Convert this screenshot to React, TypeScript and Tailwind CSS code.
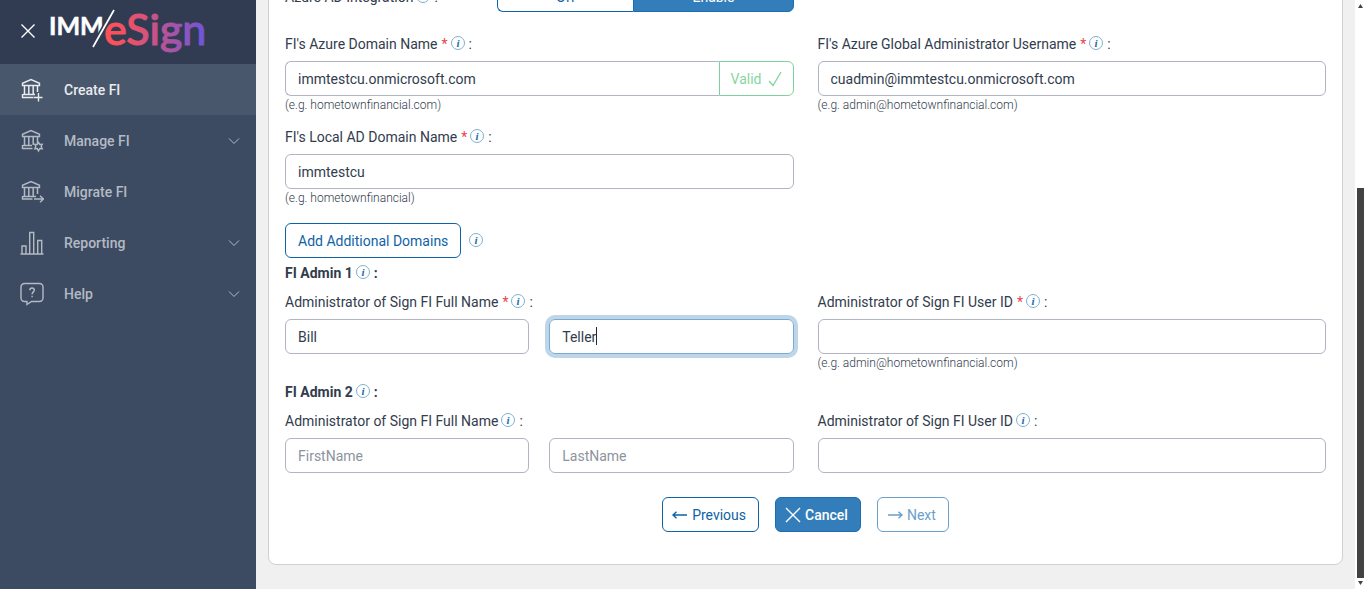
import React from 'react';

type IconProps = { className?: string };

const BankBase: React.FC = () => (
  <>
    <path d="M2.500 7.500V5.300L11 1.500l8.500 3.800v2.200z" />
    <path strokeWidth="1.500" d="M4.500 8v8M8.800 8v8M13.200 8v8M17.500 8v6" />
  </>
);

const CreateIcon: React.FC<IconProps> = ({ className }) => (
  <svg viewBox="0 0 24 24" fill="none" stroke="currentColor" strokeWidth="1.4" className={className}>
    <BankBase />
    <path d="M3 16.500h12M2.500 16v3.500h11M18.500 15v8.500M14 19.500h8.500" />
  </svg>
);

const ManageIcon: React.FC<IconProps> = ({ className }) => (
  <svg viewBox="0 0 24 24" fill="none" stroke="currentColor" strokeWidth="1.4" className={className}>
    <BankBase />
    <path d="M3 16.500h9M2.500 16v3.500h10" />
    <path d="M18.500 13.500l1.300 2 2.400-.200-1 2.200 1 2.200-2.400-.200-1.300 2.500-1.300-2.500-2.400.200 1-2.200-1-2.200 2.400.200z" />
  </svg>
);

const MigrateIcon: React.FC<IconProps> = ({ className }) => (
  <svg viewBox="0 0 24 24" fill="none" stroke="currentColor" strokeWidth="1.4" className={className}>
    <BankBase />
    <path d="M3 16.500h13M2.500 16v3h10" />
    <path d="M14 19h9.500M20 15.800l3.400 3.200-3.400 3.200" />
  </svg>
);

const ReportIcon: React.FC<IconProps> = ({ className }) => (
  <svg viewBox="0 0 24 24" fill="none" stroke="currentColor" strokeWidth="1.4" className={className}>
    <path d="M.500 23h23M2 23v-8h4v8M9.700 23V1.500h4V23M17.700 23V9.500h4V23" />
  </svg>
);

const HelpIcon: React.FC<IconProps> = ({ className }) => (
  <svg viewBox="0 0 24 24" fill="none" stroke="currentColor" strokeWidth="1.400" className={className}>
    <path d="M4.500 1.500h15a3.500 3.500 0 0 1 3.500 3.500v11a3.500 3.500 0 0 1-3.500 3.500h-8L7 22.500v-3H4.500A3.500 3.500 0 0 1 1 16V5a3.500 3.500 0 0 1 3.500-3.500z" />
    <path d="M9.800 8.200c0-3 4.500-3 4.500 0 0 1.700-2.200 1.700-2.200 4M12.100 13.800v1.500" />
  </svg>
);

const Chevron: React.FC = () => (
  <svg viewBox="0 0 12 12" fill="none" stroke="currentColor" className="w-3 h-3">
    <path d="M1 3.500l5 5 5-5" />
  </svg>
);

const Arrow: React.FC<{ flip?: boolean }> = ({ flip }) => (
  <svg viewBox="0 0 16 10" fill="none" stroke="currentColor" strokeWidth="1.4" className={`w-4 h-[10px] ${flip ? 'rotate-180' : ''}`}>
    <path d="M1 5h14M4.500 1.800L1 5l3.500 3.200" />
  </svg>
);

const InfoIcon: React.FC = () => (
  <svg viewBox="0 0 14 14" className="w-[14px] h-[14px] shrink-0 mb-[2px]" role="img" aria-label="More information">
    <circle cx="7" cy="7" r="6.500" fill="none" stroke="#80b0cc" strokeWidth="1" />
    <text x="7" y="10.500" textAnchor="middle" fontSize="11" fontWeight="700" fontStyle="italic" fontFamily="Liberation Serif, serif" fill="#1b6cab">i</text>
  </svg>
);

const Logo: React.FC = () => (
  <svg viewBox="0 0 160 56" className="w-[160px] h-14" role="img" aria-label="IMM eSign">
    <defs>
      <linearGradient id="sign" gradientUnits="userSpaceOnUse" x1="55" y1="0" x2="156" y2="0">
        <stop offset="0.100" stopColor="#fb5158" />
        <stop offset="0.400" stopColor="#d9527c" />
        <stop offset="0.700" stopColor="#a055ad" />
        <stop offset="1" stopColor="#6c55da" />
      </linearGradient>
    </defs>
    <text x="-1" y="31" fontSize="25" fontWeight="700" fontFamily="Lato, sans-serif" fill="#fff" stroke="#fff" strokeWidth="0.500">IMM</text>
    <text x="54" y="41" fontSize="43" fontWeight="500" fontFamily="Lato, sans-serif" fill="url(#sign)" stroke="url(#sign)" strokeWidth="1">eSign</text>
    <path d="M43 43L64 6" stroke="#313c53" strokeWidth="5" />
    <path d="M43 43L64 6" stroke="#fff" strokeWidth="1.700" />
  </svg>
);

const menuItems = [
  { label: 'Create FI', icon: CreateIcon, active: true, expandable: false },
  { label: 'Manage FI', icon: ManageIcon, active: false, expandable: true },
  { label: 'Migrate FI', icon: MigrateIcon, active: false, expandable: false },
  { label: 'Reporting', icon: ReportIcon, active: false, expandable: true },
  { label: 'Help', icon: HelpIcon, active: false, expandable: true },
];

const Sidebar: React.FC = () => (
  <aside className="w-64 shrink-0 bg-[#3c4b62]">
    <div className="h-16 flex items-center gap-[14px] pl-5 bg-[#313c53]">
      <button aria-label="Close menu" className="w-4 h-4 text-white">
        <svg viewBox="0 0 16 16" fill="none" stroke="currentColor" strokeWidth="1.4" className="w-4 h-4">
          <path d="M1.500 .500l13 13M14.500 .500l-13 13" />
        </svg>
      </button>
      <Logo />
    </div>
    <nav>
      {menuItems.map((item) => {
        const Icon = item.icon;
        return (
          <a
            key={item.label}
            href="#"
            className={`flex items-center h-[51px] pl-5 pr-4 text-sm font-medium ${
              item.active ? 'bg-[#48576c] text-[#e9ebee]' : 'text-[#b4bac4]'
            }`}
          >
            <Icon className="w-6 h-6 shrink-0" />
            <span className="flex-1 pl-5">{item.label}</span>
            {item.expandable && <Chevron />}
          </a>
        );
      })}
    </nav>
  </aside>
);

interface LabelProps {
  htmlFor?: string;
  text: string;
  required?: boolean;
}

const FieldLabel: React.FC<LabelProps> = ({ htmlFor, text, required }) => (
  <label htmlFor={htmlFor} className="flex items-center h-6 mb-[5px] whitespace-nowrap">
    {text}
    {required && <span className="pl-1 text-[#e8464a]">*</span>}
    <span className="flex items-center gap-1 pl-[3px]">
      <InfoIcon />:
    </span>
  </label>
);

const Hint: React.FC<{ children: React.ReactNode }> = ({ children }) => (
  <p className="h-[18px] text-xs leading-[18px] font-light">{children}</p>
);

const Heading: React.FC<{ text: string }> = ({ text }) => (
  <h2 className="flex items-center h-6 mb-[5px] gap-[3px] font-bold">
    {text}
    <span className="flex items-center gap-1"><InfoIcon />:</span>
  </h2>
);

const inputClass = 'block w-full min-w-0 h-[35px] px-3 rounded-md border border-[#b0b4c3] bg-white text-[#323c4d] placeholder:text-[#8d939e] outline-none';

export default function App() {
  return (
    <div className="flex h-screen overflow-hidden bg-[#f0f0f0] font-['Roboto',sans-serif] text-sm text-[#323c4d]">
      <Sidebar />

      <main className="flex-1 min-w-0 flex flex-col justify-end px-3 pb-6">
        <form className="shrink-0 px-4 pt-4 pb-8 bg-white border border-[#cfd0d4] rounded-lg">
          <div className="grid grid-cols-2 gap-6 mb-5">
            <div className="flex items-center">
              <div className="w-5/12">
                <span className="flex items-center gap-[3px]">
                  Azure AD Integration
                  <span className="flex items-center gap-1"><InfoIcon />:</span>
                </span>
              </div>
              <div className="w-7/12 flex h-[31px]">
                <button type="button" className="flex-auto rounded-l-md border border-r-0 border-[#0f62a5] text-[#0f62a5]">Off</button>
                <button type="button" className="flex-auto rounded-r-md border border-[#1b6cb0] bg-[#337eba] text-white">Enable</button>
              </div>
            </div>
          </div>

          <div className="grid grid-cols-2 gap-x-6 gap-y-[11px]">
            <div>
              <FieldLabel htmlFor="azure-domain" text="FI's Azure Domain Name" required />
              <div className="flex">
                <input id="azure-domain" className="flex-1 min-w-0 h-[35px] px-3 rounded-l-md border border-r-0 border-[#b0b4c3] outline-none" defaultValue="immtestcu.onmicrosoft.com" />
                <span className="flex items-center gap-[6px] h-[35px] px-[11px] rounded-r-md border border-[#7fd19c] text-[#86d6a1]">
                  Valid
                  <svg viewBox="0 0 14 16" fill="none" stroke="currentColor" strokeWidth="1.4" className="w-[14px] h-4">
                    <path d="M1 10l4 4.500L13 1" />
                  </svg>
                </span>
              </div>
              <Hint>(e.g. hometownfinancial.com)</Hint>
            </div>
            <div>
              <FieldLabel htmlFor="azure-user" text="FI's Azure Global Administrator Username" required />
              <input id="azure-user" className={inputClass} defaultValue="cuadmin@immtestcu.onmicrosoft.com" />
              <Hint>(e.g. admin@hometownfinancial.com)</Hint>
            </div>
            <div>
              <FieldLabel htmlFor="local-domain" text="FI's Local AD Domain Name" required />
              <input id="local-domain" className={inputClass} defaultValue="immtestcu" />
              <Hint>(e.g. hometownfinancial)</Hint>
            </div>
          </div>

          <div className="flex items-center gap-2 mt-4 mb-[3px]">
            <button type="button" className="h-[35px] px-3 rounded-md border border-[#0f62a5] text-[#0f62a5]">Add Additional Domains</button>
            <InfoIcon />
          </div>

          <Heading text="FI Admin 1" />
          <div className="grid grid-cols-2 gap-6 mb-2">
            <div>
              <FieldLabel htmlFor="first-1" text="Administrator of Sign FI Full Name" required />
              <div className="grid grid-cols-2 gap-5">
                <input id="first-1" className={inputClass} defaultValue="Bill" />
                <div className="relative">
                  <input aria-label="Last name of admin 1" className="block w-full h-[35px] px-3 rounded-md border border-[#78aad3] ring-4 ring-[#bfd6e9] outline-none caret-transparent" defaultValue="Teller" />
                  <span className="absolute left-[47px] top-2 w-px h-[18px] bg-[#1f2937]" />
                </div>
              </div>
            </div>
            <div>
              <FieldLabel htmlFor="user-1" text="Administrator of Sign FI User ID" required />
              <input id="user-1" className={inputClass} />
              <Hint>(e.g. admin@hometownfinancial.com)</Hint>
            </div>
          </div>

          <Heading text="FI Admin 2" />
          <div className="grid grid-cols-2 gap-6">
            <div>
              <FieldLabel htmlFor="first-2" text="Administrator of Sign FI Full Name" />
              <div className="grid grid-cols-2 gap-5">
                <input id="first-2" className={inputClass} placeholder="FirstName" />
                <input aria-label="Last name of admin 2" className={inputClass} placeholder="LastName" />
              </div>
            </div>
            <div>
              <FieldLabel htmlFor="user-2" text="Administrator of Sign FI User ID" />
              <input id="user-2" className={inputClass} />
            </div>
          </div>

          <div className="flex justify-center gap-4 mt-6">
            <button type="button" className="flex items-center gap-1 h-[35px] pl-[9px] pr-3 rounded-md border border-[#0f62a5] text-[#0f62a5]">
              <Arrow />
              Previous
            </button>
            <button type="button" className="flex items-center gap-1 h-[35px] pl-[9px] pr-3 rounded-md border border-[#1b6cb0] bg-[#337eba] text-white font-medium">
              <svg viewBox="0 0 16 16" fill="none" stroke="currentColor" strokeWidth="1.4" className="w-4 h-4">
                <path d="M1 1l14 14M15 1L1 15" />
              </svg>
              Cancel
            </button>
            <button type="button" disabled className="flex items-center gap-1 h-[35px] pl-[9px] pr-3 rounded-md border border-[#6a9fc9] text-[#6a9fc9]">
              <Arrow flip />
              Next
            </button>
          </div>
        </form>
      </main>

      {/* scrollbar */}
      <div className="w-[11px] shrink-0 flex flex-col bg-white pl-[2px] pr-[2px] py-1 text-[#424242]" aria-hidden="true">
        <svg viewBox="0 0 7 4" fill="currentColor" className="w-[7px] h-1"><path d="M3.500 0L6 4H1z" /></svg>
        <div className="basis-0 grow-[180]" />
        <div className="basis-0 grow-[390] bg-[#424242]" />
        <svg viewBox="0 0 7 4" fill="currentColor" className="w-[7px] h-1 mt-[3px]"><path d="M3.500 4L6 0H1z" /></svg>
      </div>
    </div>
  );
}
